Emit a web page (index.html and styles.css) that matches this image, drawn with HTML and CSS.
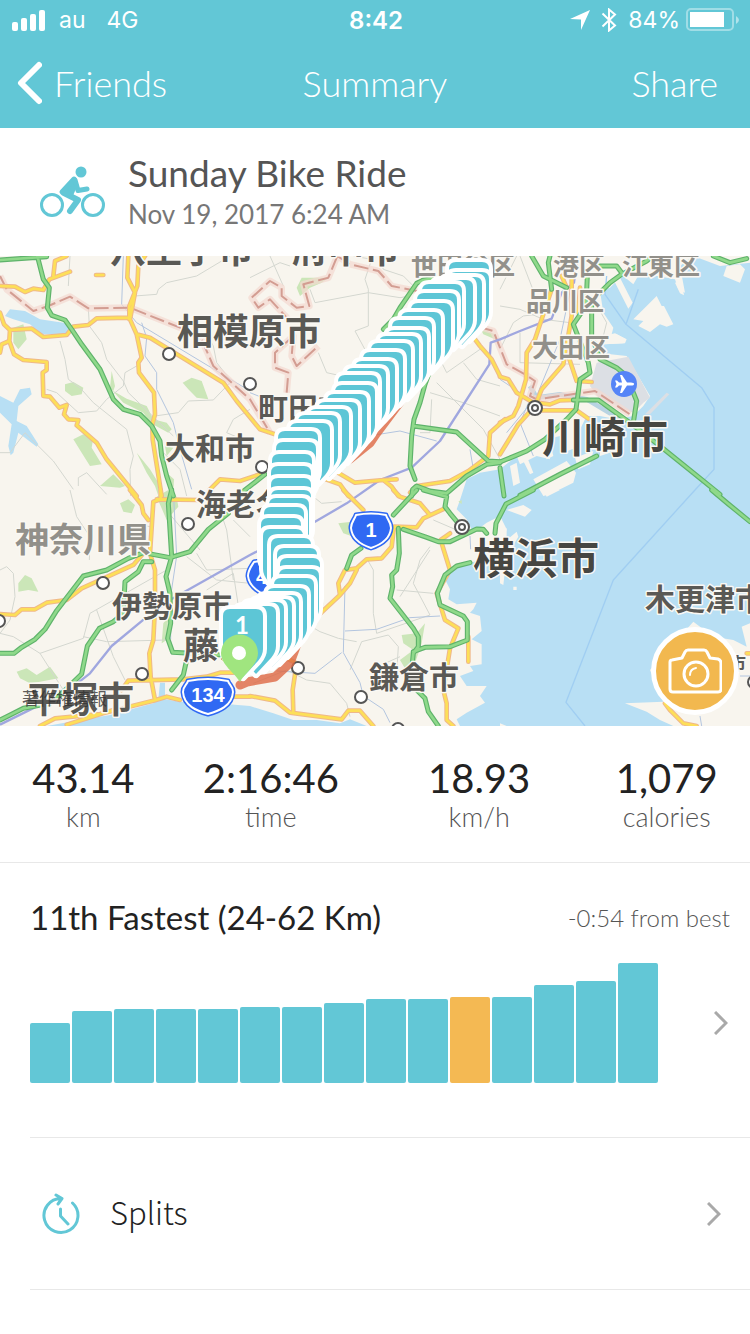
FILE: index.html
```html
<!DOCTYPE html>
<html lang="en-us">

<head>
<title>Summary</title>
<meta charset="utf-8" />
<meta name="viewport" content="width=device-width, initial-scale=1.0">

<link rel="stylesheet" href="styles.css">
</head>

<body>
<header class="top">
  <div class="status">
    <div class="status-side">
      <svg width="34" height="21" viewBox="0 0 34 21" fill="#fff"><rect y="12" width="6" height="9" rx="2"/><rect x="9" y="8" width="6" height="13" rx="2"/><rect x="18" y="4" width="6" height="17" rx="2"/><rect x="27" y="0" width="6" height="21" rx="2"/></svg>
      <span class="carrier">au</span>
      <span>4G</span>
    </div>
    <div class="clock">8:42</div>
    <div class="status-side status-right">
      <svg width="20" height="20" viewBox="0 0 20 20" fill="#fff"><path d="M20 0 11 20V9.500L0 9z"/></svg>
      <svg class="bluetooth" width="16" height="24" viewBox="0 0 16 24" fill="none" stroke="#fff" stroke-width="2"><path d="M1.500 5.500 14 17.500 8 22.500V1.500L14 6.500 1.500 18.500"/></svg>
      <span class="percent">84%</span>
      <svg width="54" height="24" viewBox="0 0 54 24"><rect x="1" y="1" width="46" height="21" rx="4" fill="none" stroke="#fff" stroke-opacity=".4" stroke-width="2"/><rect x="4" y="4" width="34" height="15" fill="#fff"/><path d="M50 8q6 4 0 8z" fill="#fff" fill-opacity=".5"/></svg>
    </div>
  </div>
  <nav class="nav">
    <a class="nav-link" href="#friends">
      <svg width="26" height="44" viewBox="0 0 26 44" fill="none" stroke="#fff" stroke-width="6" stroke-linecap="round" stroke-linejoin="round"><path d="M23 4 5 22 23 40"/></svg>
      Friends
    </a>
    <h1>Summary</h1>
    <a class="nav-link nav-right" href="#share">Share</a>
  </nav>
</header>

<main>
<section class="ride">
  <svg width="66" height="52" viewBox="0 0 66 52" fill="none" stroke="#62c7d6" stroke-linecap="round" stroke-linejoin="round">
    <circle cx="12" cy="39" r="10.500" stroke-width="3"/>
    <circle cx="53" cy="39" r="10.500" stroke-width="3"/>
    <circle cx="41" cy="6" r="5.500" fill="#62c7d6" stroke="none"/>
    <path d="M24 27 38 34 30 45" stroke-width="6"/>
    <path d="M34 13 22 26 31 28 34 21z" fill="#62c7d6" stroke-width="5"/>
    <path d="M35 14 38 24.500 47 23" stroke-width="5"/>
  </svg>
  <div>
    <h2>Sunday Bike Ride</h2>
    <p>Nov 19, 2017 6:24 AM</p>
  </div>
</section>

<section class="map">
  <svg class="map-canvas" viewBox="0 0 750 470" preserveAspectRatio="xMidYMid slice">
    <defs>
      <!-- expressways -->
      <g id="expressways">
        <path d="M0 12 140 2M112 0 130 70 148 95 142 155 155 178 195 192 215 220 245 265 300 340 340 430 370 460 420 475 455 510 480 555 485 600 500 660 520 720M730 706 795 655"/>
        <path transform="translate(750 0)" d="M545 68 520 72 500 82 450 155 430 190 400 220M545 330 525 385 510 440 492 490 485 540 480 630 495 670M490 510 620 528 715 615 750 617M750 620 710 625 650 660 590 712 540 705 500 690 488 700 485 720"/>
        <path transform="translate(1500 0)" d="M0 618 80 585 135 550 200 490 228 460 240 370 270 350 265 320 220 205 258 150 262 60M95 0 130 60 200 95M150 0 145 20 155 100M275 130 275 240 300 310 350 335 380 360 410 435 400 500M220 432 295 432 390 500 480 570 660 715M300 110 330 80 365 55 440 15 460 0M640 0 690 20 740 8M60 718 180 655 290 600M300 30 350 30 365 50M0 635 12 720"/>
        <path transform="translate(0 702)" d="M515 0 505 40 515 200 498 260 510 310 512 400 503 445 518 487 665 495M0 490 42 490 65 472 105 448 135 418 170 362 250 258 320 240 385 205 430 188 510 203 570 185 625 118 685 70M455 215 430 215 415 245 375 275 370 370 340 395 298 415 262 468 245 552 180 615 150 640 70 655 20 680 0 690M562 500 550 555 515 600"/>
        <path transform="translate(750 702)" d="M500 0 430 75M520 0 590 20 585 50 600 70 625 100M460 118 530 142 565 155 600 155 680 117 700 118 710 130M735 130 738 100 768 42 850 0M660 218 620 228 585 255 562 310 570 345 640 378 652 395 652 450 600 470 525 472 490 485M445 115 448 190 440 240 425 255 428 290 420 325 490 415 505 440 505 470 490 490 485 540 500 600 525 625 535 665 565 708M333 175 305 195 290 235"/>
        <path transform="translate(1500 702)" d="M635 0 685 42 750 95"/>
      </g>
      <!-- main roads -->
      <g id="roads">
        <path d="M0 90 45 92 75 108 100 98 130 102 148 70 210 47M200 0 165 15 160 60M288 57 310 57M0 170 12 205 30 222 95 218 130 243 200 237 220 212 265 207 290 187 385 185M0 290 5 265 28 255 30 222M28 255 42 295 70 312 140 318 140 342 128 350 130 420 150 422 178 455 200 447 192 475 205 490 235 492 230 508 290 560 320 610 410 720M385 0 382 65 405 110 390 190 410 235 425 305 415 320 417 350 462 410 465 475 457 505 458 550 485 720M435 0 415 30 412 90 388 150 388 190M410 235 450 245 670 380 710 435 780 520 825 535M630 700 660 670 720 675 780 655"/>
        <path transform="translate(750 0)" d="M200 660 270 685 295 720M230 630 315 680 400 672 440 670M400 672 425 692 445 720M660 230 690 270 725 310 750 360M765 490 720 530 715 600 655 645 600 675 500 690 480 710"/>
        <path transform="translate(1500 0)" d="M0 362 25 370 50 410 100 440M155 100 105 250 80 290 78 370 55 450 40 480 0 500M0 595 55 505 105 450 125 400 190 325 215 180 215 60M205 300 230 375 275 378M110 440 150 445 180 433 220 432M120 463 230 463 265 488M240 95 235 170M185 60 200 95"/>
        <path transform="translate(0 702)" d="M390 0 425 45 430 70 445 90M482 0 482 28 460 35 450 190 465 240 465 350 460 450 448 490 452 560 465 630M470 28 600 30M0 372 45 375 65 358 105 358 140 338 200 330 245 295 400 225 430 190M365 600 385 572 550 568 620 560 660 548 700 548M120 708 165 685 300 672 460 632 500 620 540 630M340 660 200 704M700 620 750 620"/>
        <path transform="translate(750 702)" d="M0 618 75 632 120 668 275 688 295 662 330 662 370 708M130 668 128 600 140 520 100 500M120 495 150 455 190 390 270 315 265 280 285 240 320 235 350 208 395 205 425 170 432 110 500 112 520 85 585 55M270 315 300 280 320 240M280 0 340 60M430 0 450 20 510 40 540 75M600 130 572 150 600 240 560 310 585 390 625 415 600 475 580 600 590 640 590 690 610 708M655 440 655 515"/>
        <path transform="translate(1500 702)" d="M495 640 510 660 550 700 590 708M740 490 750 490"/>
      </g>
      <!-- prefecture border -->
      <g id="border">
        <path d="M0 60 20 100 100 165 145 150 210 122 265 157 390 155 540 215 600 240 640 330 750 430 810 530"/>
        <path transform="translate(750 0)" d="M262 0 235 65 160 85 178 150 140 155 95 120 95 95 60 75 5 125 25 155 60 130 115 190M262 0 300 25 385 45 425 90 500 105M110 410 115 350 75 335 75 290 130 240 125 300 140 330 205 270M685 212 730 225 770 325 825 355 855 375 840 420 860 430 1035 405 1140 475"/>
      </g>
      <path id="marker" d="M-20 7Q-20 0-13 0H13Q20 0 20 7V40Q20 46 15 52L0 68-15 52Q-20 46-20 40z"/>
      <g id="shields">
        <path d="M356 259Q371 256 386 259C387 263 391 266 391 272C390 283 380 289 371 292C362 289 352 283 351 272C351 266 355 263 356 259z"/>
        <path d="M254 306Q267 303 280 306C283 311 286 314 286 320C285 330 276 336 267 340C258 336 249 330 248 320C248 314 251 311 254 306z"/>
        <path d="M188 425Q208 421 228 425C229 429 233 430 233 436C232 450 219 455 208 458C197 455 184 450 183 436C183 430 187 429 188 425z"/>
      </g>
    </defs>

    <g transform="scale(.33333)">
      <rect class="land" width="2250" height="1410"/>
      <path class="water" d="M2250 20 2160 30 2080 0 2040 30 2055 110 2035 100 2025 70 1920 50 1900 85 1870 60 1850 75 1830 95 1800 105 1810 170 1840 215 1835 235 1850 235 1878 250 1870 262 1810 265 1790 290 1880 300 1950 420 1930 450 1900 480 1850 490 1800 480 1760 480 1730 540 1740 570 1690 590 1680 540 1640 550 1650 610 1610 600 1560 625 1550 600 1500 640 1440 650 1400 670 1380 732 1370 760 1400 790 1420 830 1460 800 1500 780 1520 820 1500 900 1510 970 1480 900 1340 942 1330 960 1350 1000 1345 1030 1370 1045 1430 1040 1420 1060 1410 1070 1440 1080 1445 1125 1415 1150 1445 1165 1445 1225 1410 1230 1420 1245 1380 1260 1400 1290 1460 1290 1440 1320 1455 1340 1400 1370 1370 1390 1380 1410H2250z"/>
      <path class="water" d="M140 1410 240 1392 330 1377 460 1342 475 1330 480 1280 495 1280 495 1330 540 1337 650 1342 750 1350 820 1372 880 1392 950 1392 1020 1402 1050 1390 1100 1410z"/>
      <path class="water" d="M15 180 30 160 75 165 120 190 190 200 215 215 200 235 125 235 90 205 40 190zM0 420 40 440 60 400 90 395 95 415 55 450 50 495 80 510 115 565 110 572 55 530 40 590 32 598 25 570 35 505 0 470z"/>
      <path class="river" d="M1590 390 1610 425 1680 415 1760 430 1860 490"/>
      <g class="land">
        <path transform="translate(1500 0)" d="M340 70 360 65 398 140 385 158zM470 120 485 150 492 150 520 205 500 212 480 205 450 228 415 210 430 195 400 190 440 150zM670 60 680 30 720 25 735 40 720 80zM525 80 545 75 552 118 540 112zM310 240 345 232 380 250 375 262 315 265zM100 670 200 615 228 650 220 680 150 715 130 720zM225 605 280 585 270 625 235 640zM30 630 50 620 60 680 40 690zM65 605 80 600 100 650 90 655zM125 570 150 560 160 600 140 610zM185 520 210 500 220 560 200 570zM300 580 340 560 330 590 300 600z"/>
        <path transform="translate(1500 702)" d="M580 395 640 440 700 450 740 470 725 410 750 400V708H520L480 690 440 665 375 640 490 635 450 540zM20 60 70 45 95 60 75 80zM130 0 180 0 140 20zM0 120 20 115 20 150 50 125 55 140 20 200 10 285 0 280zM40 290 50 290 50 300 40 300zM0 700 20 708H0z"/>
      </g>
      <path class="airport" d="M1790 320 1885 302 1950 425 1930 440 1900 470 1800 430 1770 390zM1935 475 2000 410 2008 415 1950 475z"/>
      <g class="park">
        <path d="M40 215 70 205 80 250 55 280 40 260zM195 385 220 378 250 395 245 415 215 420 195 405zM548 380 575 365 605 375 625 430 590 425 565 400zM335 345 345 390 340 405 380 428 440 450 460 490 500 500 515 520 505 530 450 500 430 470 370 440 330 395zM220 550 250 535 280 545 275 575 305 625 270 630 245 590zM300 690 340 655 375 690 360 695zM410 590 450 640 475 680 475 720 465 690 440 650zM495 570 520 575 500 600zM505 655 522 670 520 710 510 700z"/>
        <path transform="translate(750 0)" d="M140 95 155 65 235 65 215 80 180 95 150 120zM690 215 735 235 735 250 700 235z"/>
        <path transform="translate(0 702)" d="M55 280 75 255 95 265 115 305 85 300 55 305zM360 40 385 28 405 45 395 70 370 65zM470 20 500 90 535 50 530 20 505 0zM50 545 80 535 110 555 150 530 175 565 120 575 90 580 60 565zM490 400 505 380 500 450 485 460z"/>
        <path transform="translate(750 702)" d="M265 100 305 95 310 140 280 130zM455 435 500 430 525 400 515 460 495 520 480 560 450 510 490 480 460 460zM500 560 520 540 520 600 495 600zM625 35 635 30 635 42z"/>
      </g>

      <g class="lane">
        <path d="M205 90 210 0M405 120 470 115 475 100 500 80 590 60 690 0M265 155 268 210 305 260 320 310 370 375 385 410 520 540M180 255 195 310 205 370 240 395 280 440 380 520 400 600 390 640 392 720M140 400 170 410 235 470 290 465 320 430 370 390 375 350 410 330M465 480 535 470 565 435 640 432 690 380M0 590 30 590 75 530 160 615 220 700M235 690 235 665 260 650 320 715M620 230 640 270 650 320 690 370M490 590 540 640 560 720M750 460 700 490 680 530 750 560"/>
        <path transform="translate(750 0)" d="M0 65 90 20 120 30M60 0 100 90M310 0 365 10 345 70 355 100 355 210 315 225 350 290 385 310M180 100 195 140 355 110 450 125 480 120M385 0 400 40 460 60 500 100M205 290 230 350 320 370M500 300 560 290 590 350 640 315 690 280M545 430 540 530 510 530M560 380 700 520 750 610M640 320 680 370 750 390M540 410 640 440 750 480"/>
        <path transform="translate(1500 0)" d="M0 150 60 160 130 190 210 200M0 280 40 200 70 180 150 170M60 230 60 320 240 325M0 100 50 0M60 0 110 130M280 130 320 200 310 240"/>
        <path transform="translate(0 702)" d="M210 0 230 80 270 140 268 210M0 240 20 230 40 250 45 320 30 390 0 430 40 440 120 490 190 600M250 440 320 455 500 450M290 360 340 500 375 570M120 490 250 445 270 370 500 240M640 0 680 120 700 270M560 200 650 270 750 280M590 190 620 240 750 235M700 90 750 140M490 50 600 180M620 300 700 250 720 380M400 100 450 110"/>
        <path transform="translate(750 702)" d="M110 255 155 285M150 390 210 425 265 445 320 455M200 280 130 330M300 540 335 455 415 435 445 470 440 550M350 205 370 240 370 370 380 430 540 375M190 20 215 40 275 35M540 170 510 210 490 280 540 375M440 300 550 310M450 320 540 180M10 580 110 540 170 570 240 580 290 640 300 680M450 500 360 540M550 90 620 120"/>
      </g>
      <g class="track">
        <path d="M370 0 365 145 410 200 750 405M425 200 440 245 435 300 470 350 470 400 520 500 540 580 575 700M750 410 800 430M1105 540 1200 525 1310 555"/>
        <path d="M1720 60 1680 250 1610 420 1520 530M1500 370 1590 430 1560 500 1600 600M1410 580 1420 640M520 702 530 900 512 1020 512 1150M1035 990 1030 1190 1080 1280 1090 1320 1150 1360 1170 1400M1035 1125 1130 1120 1230 1085 1320 1080M1025 1190 945 1252 830 1245M1410 840 1412 880M2100 1380 2105 1410M2220 1260 2250 1260"/>
      </g>
      <path class="sea-line" d="M1820 60 1815 115 1878 205 1915 100M1878 205 2105 395 2142 455 2142 640 2085 702 1840 972 1698 1339 1755 1410"/>
      <use class="border-halo" href="#border"/>
      <use class="border-line" href="#border"/>
      <path class="rail" d="M1732 0 1722 80 1685 110 1655 188 1560 225 1500 250 1472 260 1468 325 1320 555 1235 635 1140 672 1040 742 945 797 750 897 510 1032 435 1087 335 1170 270 1252 200 1307 0 1406"/>
      <use class="road-edge" href="#roads"/>
      <use class="road" href="#roads"/>
      <use class="express-edge" href="#expressways"/>
      <use class="express" href="#expressways"/>
    </g>

    <!-- towns -->
    <g class="town">
      <circle cx="169" cy="98" r="6"/><circle cx="250" cy="128" r="6"/><circle cx="262" cy="211" r="6"/><circle cx="188" cy="268" r="6"/><circle cx="103" cy="327" r="6"/><circle cx="-1" cy="365" r="6"/><circle cx="142" cy="418" r="6"/><circle cx="298" cy="412" r="6"/><circle cx="361" cy="441" r="6"/><circle cx="398" cy="473" r="6"/><circle cx="754" cy="426" r="6"/>
      <circle cx="535" cy="152" r="7"/><circle cx="535" cy="152" r="3"/><circle cx="462" cy="271" r="7"/><circle cx="462" cy="271" r="3"/>
    </g>
    <g class="label" lang="ja">
      <text class="l36" x="110" y="7">八王子市</text>
      <text class="l36" x="292" y="7">府中市</text>
      <text class="l36" x="177" y="89">相模原市</text>
      <text class="l30" x="258" y="163">町田市</text>
      <text class="l30" x="165" y="203">大和市</text>
      <text class="l30" x="196" y="259">海老名市</text>
      <text class="l30" x="112" y="361">伊勢原市</text>
      <text class="l36" x="183" y="403">藤沢市</text>
      <text class="l36" x="26" y="457">平塚市</text>
      <text class="l30" x="369" y="432">鎌倉市</text>
      <text class="l30" x="645" y="354">木更津市</text>
      <text class="l17" x="729" y="414">市</text>
      <text class="l42" x="542" y="197">川崎市</text>
      <text class="l42" x="473" y="318">横浜市</text>
    </g>
    <text class="legal" x="22" y="449" lang="ja">著作権情報</text>
    <g class="label label-ward" lang="ja">
      <text class="l34" x="15" y="296">神奈川県</text>
      <text class="l26" x="411" y="19">世田谷区</text>
      <text class="l26" x="553" y="19">港区</text>
      <text class="l26" x="622" y="19">江東区</text>
      <text class="l26" x="526" y="55">品川区</text>
      <text class="l26" x="532" y="101">大田区</text>
    </g>
    <use class="shield-edge" href="#shields"/>
    <use class="shield" href="#shields"/>
    <g class="shield-text">
      <text x="371" y="281">1</text>
      <text x="267" y="328">46</text>
      <text x="208" y="446">134</text>
    </g>
    <circle cx="624" cy="128" r="13" fill="#5584f7"/>
    <path d="M634 128Q634 126.500 631 126.500H627L622 119H620L622 126.500H619L617 124.500H615L616.500 128 615 131.500H617L619 129.500H622L620 137H622L627 129.500H631Q634 129.500 634 128z" fill="#fff"/>

    <!-- route and distance markers, last kilometre first -->
    <path class="route" d="M240 429 247 426 275 421 290 407 300 380 288 330 296 270 308 230 318 222 350 203 370 187 376 178 400 146 428 108 446 90 468 82 480 60"/>
    <g class="marker">
      <use href="#marker" x="469" y="6"/><use href="#marker" x="469" y="16"/><use href="#marker" x="462" y="21"/><use href="#marker" x="453" y="24"/><use href="#marker" x="442" y="28"/><use href="#marker" x="437" y="37"/><use href="#marker" x="431" y="47"/><use href="#marker" x="421" y="56"/><use href="#marker" x="412" y="64"/><use href="#marker" x="407" y="74"/><use href="#marker" x="399" y="80"/><use href="#marker" x="391" y="87"/><use href="#marker" x="383" y="96"/><use href="#marker" x="375" y="105"/><use href="#marker" x="366" y="112"/><use href="#marker" x="358" y="119"/><use href="#marker" x="355" y="129"/><use href="#marker" x="347" y="138"/><use href="#marker" x="338" y="146"/><use href="#marker" x="329" y="153"/><use href="#marker" x="318" y="159"/><use href="#marker" x="310" y="167"/><use href="#marker" x="298" y="175"/><use href="#marker" x="296" y="186"/><use href="#marker" x="292" y="198"/><use href="#marker" x="291" y="210"/><use href="#marker" x="291" y="222"/><use href="#marker" x="291" y="234"/><use href="#marker" x="289" y="242"/><use href="#marker" x="284" y="251"/><use href="#marker" x="281" y="262"/><use href="#marker" x="283" y="273"/><use href="#marker" x="291" y="282"/><use href="#marker" x="297" y="292"/><use href="#marker" x="300" y="302"/><use href="#marker" x="299" y="313"/><use href="#marker" x="294" y="322"/><use href="#marker" x="287" y="332"/><use href="#marker" x="279" y="339"/><use href="#marker" x="272" y="343"/><use href="#marker" x="264" y="346"/><use href="#marker" x="256" y="350"/><use href="#marker" x="243" y="353"/>
    </g>
    <text class="marker-text" x="242" y="378">1</text>
    <path d="M240 426C235 417 221 409 221 397A18.500 18.500 0 0 1 258 397C258 409 245 417 240 426z" fill="#a0e57f"/>
    <circle cx="239" cy="397" r="7" fill="#fff"/>
  </svg>
  <button class="camera" type="button" aria-label="Add photo">
    <svg width="54" height="46" viewBox="0 0 54 46" fill="none" stroke="#fff" stroke-width="3" stroke-linejoin="round"><path d="M4 12 14 10 17 4Q18 2 20 2H36Q38 2 39 4L42 10 50 11Q53 12 53 15V41Q53 44 50 44H5Q2 44 2 41V14Q2 12 4 12z"/><circle cx="28" cy="26" r="12"/><path d="M22 27Q22 21 28 20" stroke-width="2" stroke-linecap="round"/></svg>
  </button>
</section>

<dl class="stats">
  <div><dt>km</dt><dd>43.14</dd></div>
  <div><dt>time</dt><dd>2:16:46</dd></div>
  <div><dt>km/h</dt><dd>18.93</dd></div>
  <div><dt>calories</dt><dd>1,079</dd></div>
</dl>

<section class="rank">
  <div class="rank-head">
    <h3>11th Fastest (24-62 Km)</h3>
    <p>-0:54 from best</p>
  </div>
  <a class="rank-chart" href="#rank" aria-label="Ranking">
    <span class="bars">
      <span style="height: 60px"></span>
      <span style="height: 72px"></span>
      <span style="height: 74px"></span>
      <span style="height: 74px"></span>
      <span style="height: 74px"></span>
      <span style="height: 76px"></span>
      <span style="height: 76px"></span>
      <span style="height: 80px"></span>
      <span style="height: 84px"></span>
      <span style="height: 84px"></span>
      <span class="current" style="height: 86px"></span>
      <span style="height: 86px"></span>
      <span style="height: 98px"></span>
      <span style="height: 102px"></span>
      <span style="height: 120px"></span>
    </span>
    <svg class="chevron" width="14" height="24" viewBox="0 0 14 24"><path d="M1 1 12 12 1 23"/></svg>
  </a>
</section>

<a class="row" href="#splits">
  <svg width="38" height="42" viewBox="0 0 38 42" fill="none" stroke="#62c7d6" stroke-width="3" stroke-linecap="round" stroke-linejoin="round"><path d="M30.500 10A17 17 0 1 1 19 5.500M14 2 20 5.500 16 11M18.500 16V23L26 31"/></svg>
  <span class="row-text">Splits</span>
  <svg class="chevron" width="14" height="24" viewBox="0 0 14 24"><path d="M1 1 12 12 1 23"/></svg>
</a>
</main>
</body>

</html>
```
FILE: styles.css
```css
body {
  margin: 0;
  background-color: white;
  font-family: Lato, "Open Sans", sans-serif;
  color: #222;
}

h1, h2, h3, p, dl, dd {
  margin: 0;
}

a {
  color: inherit;
  text-decoration: none;
}

svg {
  display: block;
  flex: none;
}

/* top bar */
.top {
  background-color: #62c7d6;
  color: white;
}

.status {
  display: grid;
  grid-template-columns: 1fr auto 1fr;
  align-items: center;
  height: 40px;
  padding: 0 10px 0 12px;
  font-family: Inter, Roboto, sans-serif;
  font-size: 23px;
}

.status-side {
  display: flex;
  align-items: center;
}

.status-right {
  justify-content: flex-end;
}

.carrier {
  margin: 0 21px 0 13px;
}

.bluetooth {
  margin: 0 11px 0 11px;
}

.percent {
  margin-right: 6px;
}

.clock {
  font-size: 24px;
  font-weight: 600;
}

.nav {
  display: grid;
  grid-template-columns: 1fr auto 1fr;
  align-items: center;
  height: 88px;
  padding: 0 16px;
  font-size: 36px;
  line-height: 44px;
  font-weight: 300;
}

.nav h1 {
  font-size: 36px;
  font-weight: 300;
  margin-bottom: 3px;
}

.nav-link {
  display: flex;
  align-items: center;
  gap: 12px;
  margin-bottom: 3px;
}

.nav-right {
  justify-content: flex-end;
  padding-right: 16px;
}

/* ride title */
.ride {
  display: flex;
  align-items: center;
  gap: 22px;
  height: 128px;
  padding: 0 40px;
}

.ride h2 {
  font-size: 37px;
  line-height: 44px;
  font-weight: 400;
  color: #555;
}

.ride p {
  font-size: 26px;
  line-height: 38px;
  color: #777;
}

/* map */
.map {
  position: relative;
  height: 470px;
  overflow: hidden;
}

.map-canvas {
  width: 100%;
  height: 100%;
}

.land { fill: #f8f5ee; }
.water { fill: #b8dff4; }
.airport { fill: #dcdfe4; }
.park { fill: #cbe6b8; }

.map-canvas path {
  stroke-linejoin: round;
}

.river, .lane, .track, .sea-line, .border-halo, .border-line, .rail,
.road, .road-edge, .express, .express-edge, .route {
  fill: none;
}

.river { stroke: #b8d3e2; stroke-width: 14; }
.lane { stroke: #d4d7d0; stroke-width: 3; }
.track { stroke: #b3c5df; stroke-width: 3; }
.sea-line { stroke: #a0cef2; stroke-width: 4; }
.border-halo { stroke: #f3d9d0; stroke-opacity: 0.7; stroke-width: 20; }
.border-line { stroke: #d39d92; stroke-width: 6; stroke-dasharray: 44 14; }
.rail { stroke: #a0a7df; stroke-width: 7; }
.road-edge { stroke: #efb88a; stroke-width: 14; stroke-linecap: round; }
.road { stroke: #fddf58; stroke-width: 8; stroke-linecap: round; }
.express-edge { stroke: #5fb36b; stroke-width: 15; stroke-linecap: round; }
.express { stroke: #8fd98a; stroke-width: 8; stroke-linecap: round; }
.route { stroke: #dd6843; stroke-opacity: 0.8; stroke-width: 9; stroke-linecap: round; }

.town {
  fill: white;
  stroke: #555;
  stroke-width: 2;
}

.label {
  font-family: "Noto Sans CJK JP", sans-serif;
  font-weight: 700;
  fill: #5a5955;
  stroke: #faf8f3;
  stroke-width: 3px;
  stroke-linejoin: round;
  paint-order: stroke;
}

.label-ward {
  fill: #92908a;
}

.l17 { font-size: 17px; }
.l26 { font-size: 26px; }
.l30 { font-size: 30px; }
.l34 { font-size: 34px; }
.l36 { font-size: 36px; }
.l42 { font-size: 42px; fill: #474642; }

.legal {
  font-family: "Noto Sans CJK JP", sans-serif;
  font-size: 17px;
  fill: #333;
  fill-opacity: 0.8;
}

.shield-edge {
  fill: #3069f3;
  stroke: #3069f3;
  stroke-width: 5;
}

.shield {
  fill: #3069f3;
  stroke: white;
  stroke-width: 2;
}

.shield-text {
  fill: white;
  font-family: "Liberation Sans", Arial, sans-serif;
  font-size: 20px;
  font-weight: 700;
  text-anchor: middle;
}

.marker {
  fill: #5dc6d6;
  stroke: white;
  stroke-width: 8;
  paint-order: stroke;
}

.marker-text {
  fill: white;
  font-size: 24px;
  font-weight: 700;
  text-anchor: middle;
}

.camera {
  position: absolute;
  right: 11px;
  bottom: 11px;
  display: flex;
  align-items: center;
  justify-content: center;
  width: 88px;
  height: 88px;
  padding: 0;
  border: 5px solid white;
  border-radius: 50%;
  background-color: #f2b84f;
}

/* totals */
.stats {
  display: grid;
  grid-template-columns: 4fr 5fr 5fr 4fr;
  padding: 28px 0;
  border-bottom: 1px solid #e8e8e8;
  text-align: center;
}

.stats div {
  display: flex;
  flex-direction: column-reverse;
}

.stats dd {
  font-size: 40px;
  line-height: 48px;
}

.stats dt {
  font-size: 27px;
  line-height: 30px;
  padding-bottom: 2px;
  font-weight: 300;
  color: #555;
}

/* ranking */
.rank {
  margin-left: 30px;
  padding: 34px 20px 54px 0;
  border-bottom: 1px solid #e8e8e8;
}

.rank-head {
  display: flex;
  align-items: center;
  justify-content: space-between;
}

.rank h3 {
  font-size: 33px;
  line-height: 40px;
  font-weight: 400;
}

.rank p {
  font-size: 24px;
  font-weight: 300;
  color: #555;
}

.rank-chart {
  display: flex;
  align-items: center;
  justify-content: space-between;
  margin-top: 26px;
}

.bars {
  display: flex;
  align-items: flex-end;
  gap: 2px;
}

.bars span {
  width: 40px;
  border-radius: 2px;
  background-color: #62c7d6;
}

.bars .current {
  background-color: #f4b953;
}

.chevron {
  margin-right: 2px;
  fill: none;
  stroke: #a9a9a9;
  stroke-width: 3;
}

/* list rows */
.row {
  display: flex;
  align-items: center;
  height: 151px;
  margin-left: 30px;
  padding: 0 27px 0 12px;
  border-bottom: 1px solid #e8e8e8;
}

.row-text {
  flex: 1;
  margin-left: 30px;
  padding-bottom: 4px;
  font-family: "Noto Sans CJK JP", sans-serif;
  font-size: 31px;
  line-height: 40px;
  font-weight: 300;
}
```
